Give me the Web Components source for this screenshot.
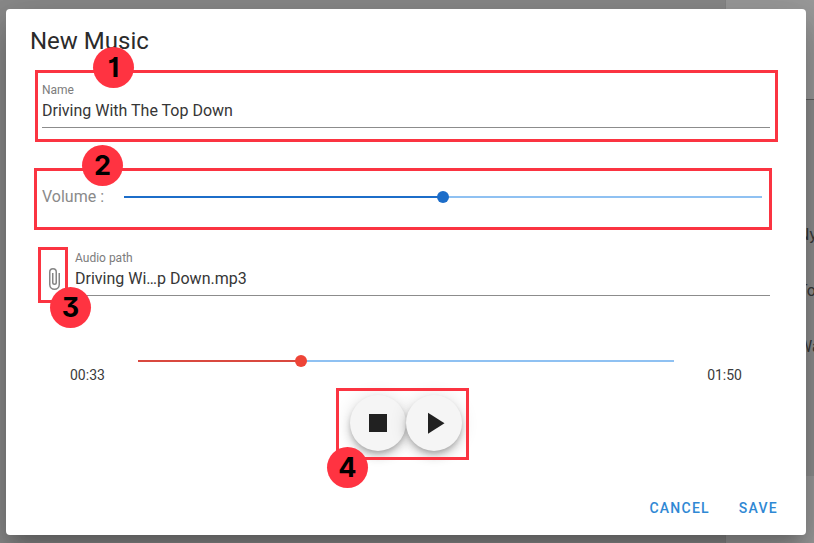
<!DOCTYPE html>
<html lang="en"><head><meta charset="utf-8"><title>New Music</title>
<style>body{margin:0;overflow:hidden;font-family:Roboto,sans-serif;color:rgba(0,0,0,.87)}</style></head>
<body><music-page></music-page>
<script>
const define=(name,html)=>customElements.define(name,class extends HTMLElement{
  constructor(){super();const t=document.createElement('template');t.innerHTML=html;
    this.attachShadow({mode:'open'}).append(t.content.cloneNode(true));}
});
define('text-field',`<style>
:host{display:block;height:49px;box-sizing:border-box;border-bottom:1px solid #8c8c8c;white-space:nowrap}
.l{font-size:12px;line-height:14px;color:#7c7c7c;padding-top:4px}
.v{font-size:16px;line-height:20px;padding-top:4px;color:#363636}
</style><div class="l"><slot name="label"></slot></div><div class="v"><slot></slot></div>`);
define('range-slider',`<style>
:host{display:flex;align-items:center;height:12px;--c:#1c6dc9}
.a{height:2px;background:var(--track,var(--c));width:var(--fill)}
.k{width:12px;height:12px;border-radius:50%;background:var(--c);flex:none;margin:0 -6px;z-index:1}
.b{height:2px;background:#8fc1f2;flex:1}
</style><div class="a"></div><div class="k"></div><div class="b"></div>`);
define('round-button',`<style>
:host{display:grid;place-items:center;width:56px;height:56px;border-radius:50%;background:#f5f5f5;color:#212121;
box-shadow:0 3px 5px -1px rgba(0,0,0,.2),0 6px 10px rgba(0,0,0,.14),0 1px 18px rgba(0,0,0,.12)}
::slotted(svg){display:block}
</style><slot></slot>`);
define('flat-button',`<style>:host{display:block;font-size:14px;line-height:16px;font-weight:500;letter-spacing:1.25px;color:#2f88d4}</style><slot></slot>`);
define('number-badge',`<style>
:host{position:absolute;display:grid;place-items:center;width:41px;height:41px;border-radius:50%;background:#ff3341;color:#000}
span{display:block;font:700 27px/41px Inter,sans-serif;font-feature-settings:"cv01","cv09"}
</style><span><slot></slot></span>`);
define('call-out',`<style>:host{position:absolute;box-sizing:border-box;border:3px solid #fb3441}</style>
<slot></slot>`);
define('page-backdrop',`<style>
:host{position:absolute;inset:0;display:grid;grid-template-columns:725px 1fr;background:#8a8a8a}
.side{background:#9b9b9b;display:grid;grid-template-rows:100px 376px 1fr;border-left:1px solid #858585}
.top{border-bottom:1px solid #606060}.list{background:#8e8e8e}
.list{display:flex;flex-direction:column;padding:107px 0 0 72px;font-size:16px;line-height:56px;color:#383838;white-space:nowrap;box-sizing:border-box}
.list div{height:56px}
</style><div></div><div class="side"><div class="top"></div><div class="list"><div>Ny</div><div>To</div><div>Wa</div></div><div></div></div>`);
define('music-dialog',`<style>
:host{position:relative;display:flex;flex-direction:column;width:800px;height:526px;margin:9px 0 0 6px;box-sizing:border-box;border-radius:4px;background:#fff;
box-shadow:0 11px 15px -7px rgba(0,0,0,.2),0 24px 38px 3px rgba(0,0,0,.14),0 9px 46px 8px rgba(0,0,0,.12)}
h1{margin:0;padding:16px 24px 0;height:70px;box-sizing:border-box;font-weight:400;font-size:24px;line-height:32px;color:#2b2b2b}
.name{margin:0 36px}
.vol{display:flex;align-items:center;margin:57px 44px 0 36px;height:24px;font-size:16px;line-height:24px;color:#8a8a8a}
.vol span{width:82px}.vol range-slider{flex:1}
.path{display:flex;margin:38px 36px 0}
.path svg{flex:none;margin:20px 9px 0 0}.path text-field{flex:1}
.play{display:grid;grid-template-columns:68px 536px 1fr;margin:59px 64px 0;font-size:14px;line-height:16px;color:#3a3a3a}
.play .t{padding-top:12px;white-space:nowrap}.play .t:last-child{text-align:right}
.buttons{display:flex;justify-content:center;margin-top:12px;height:56px}
.actions{display:flex;justify-content:flex-end;gap:29px;margin-top:49px;padding-right:28px}
</style>
<h1>New Music</h1>
<text-field class="name"><span slot="label">Name</span>Driving With The Top Down</text-field>
<div class="vol"><span>Volume :</span><range-slider style="--fill:319px"></range-slider></div>
<div class="path"><svg width="24" height="24" viewBox="0 0 24 24" fill="#858585"><path d="M16.5,6V17.5A4,4 0 0,1 12.5,21.5A4,4 0 0,1 8.5,17.5V5A2.5,2.5 0 0,1 11,2.5A2.5,2.5 0 0,1 13.5,5V15.5A1,1 0 0,1 12.5,16.5A1,1 0 0,1 11.5,15.5V6H10V15.5A2.5,2.5 0 0,0 12.5,18A2.5,2.5 0 0,0 15,15.5V5A4,4 0 0,0 11,1A4,4 0 0,0 7,5V17.5A5.5,5.5 0 0,0 12.5,23A5.5,5.5 0 0,0 18,17.5V6H16.5Z"/></svg>
<text-field><span slot="label">Audio path</span>Driving Wi…p Down.mp3</text-field></div>
<div class="play"><div class="t">00:33</div><range-slider style="--fill:163px;--c:#ee4437;--track:#d9483f"></range-slider><div class="t">01:50</div></div>
<div class="buttons">
<round-button><svg width="36" height="36" viewBox="0 0 24 24" fill="currentColor"><path d="M18,18H6V6H18V18Z"/></svg></round-button>
<round-button><svg width="36" height="36" viewBox="0 0 24 24" fill="currentColor"><path d="M8,5.14V19.14L19,12.14L8,5.14Z"/></svg></round-button></div>
<div class="actions"><flat-button>CANCEL</flat-button><flat-button>SAVE</flat-button></div>`);
define('music-page',`<style>
:host{display:block;position:relative;width:814px;height:543px;overflow:hidden}
:host::before{content:"";display:table}
</style><page-backdrop></page-backdrop><music-dialog></music-dialog>
<call-out style="left:35px;top:70px;width:743px;height:72px"></call-out>
<call-out style="left:34px;top:168px;width:738px;height:62px"></call-out>
<call-out style="left:38px;top:247px;width:30px;height:56px"></call-out>
<call-out style="left:336px;top:388px;width:133px;height:72px"></call-out>
<number-badge style="left:93px;top:47px">1</number-badge>
<number-badge style="left:82px;top:145px">2</number-badge>
<number-badge style="left:50px;top:287px">3</number-badge>
<number-badge style="left:327px;top:447px">4</number-badge>`);
</script></body></html>
